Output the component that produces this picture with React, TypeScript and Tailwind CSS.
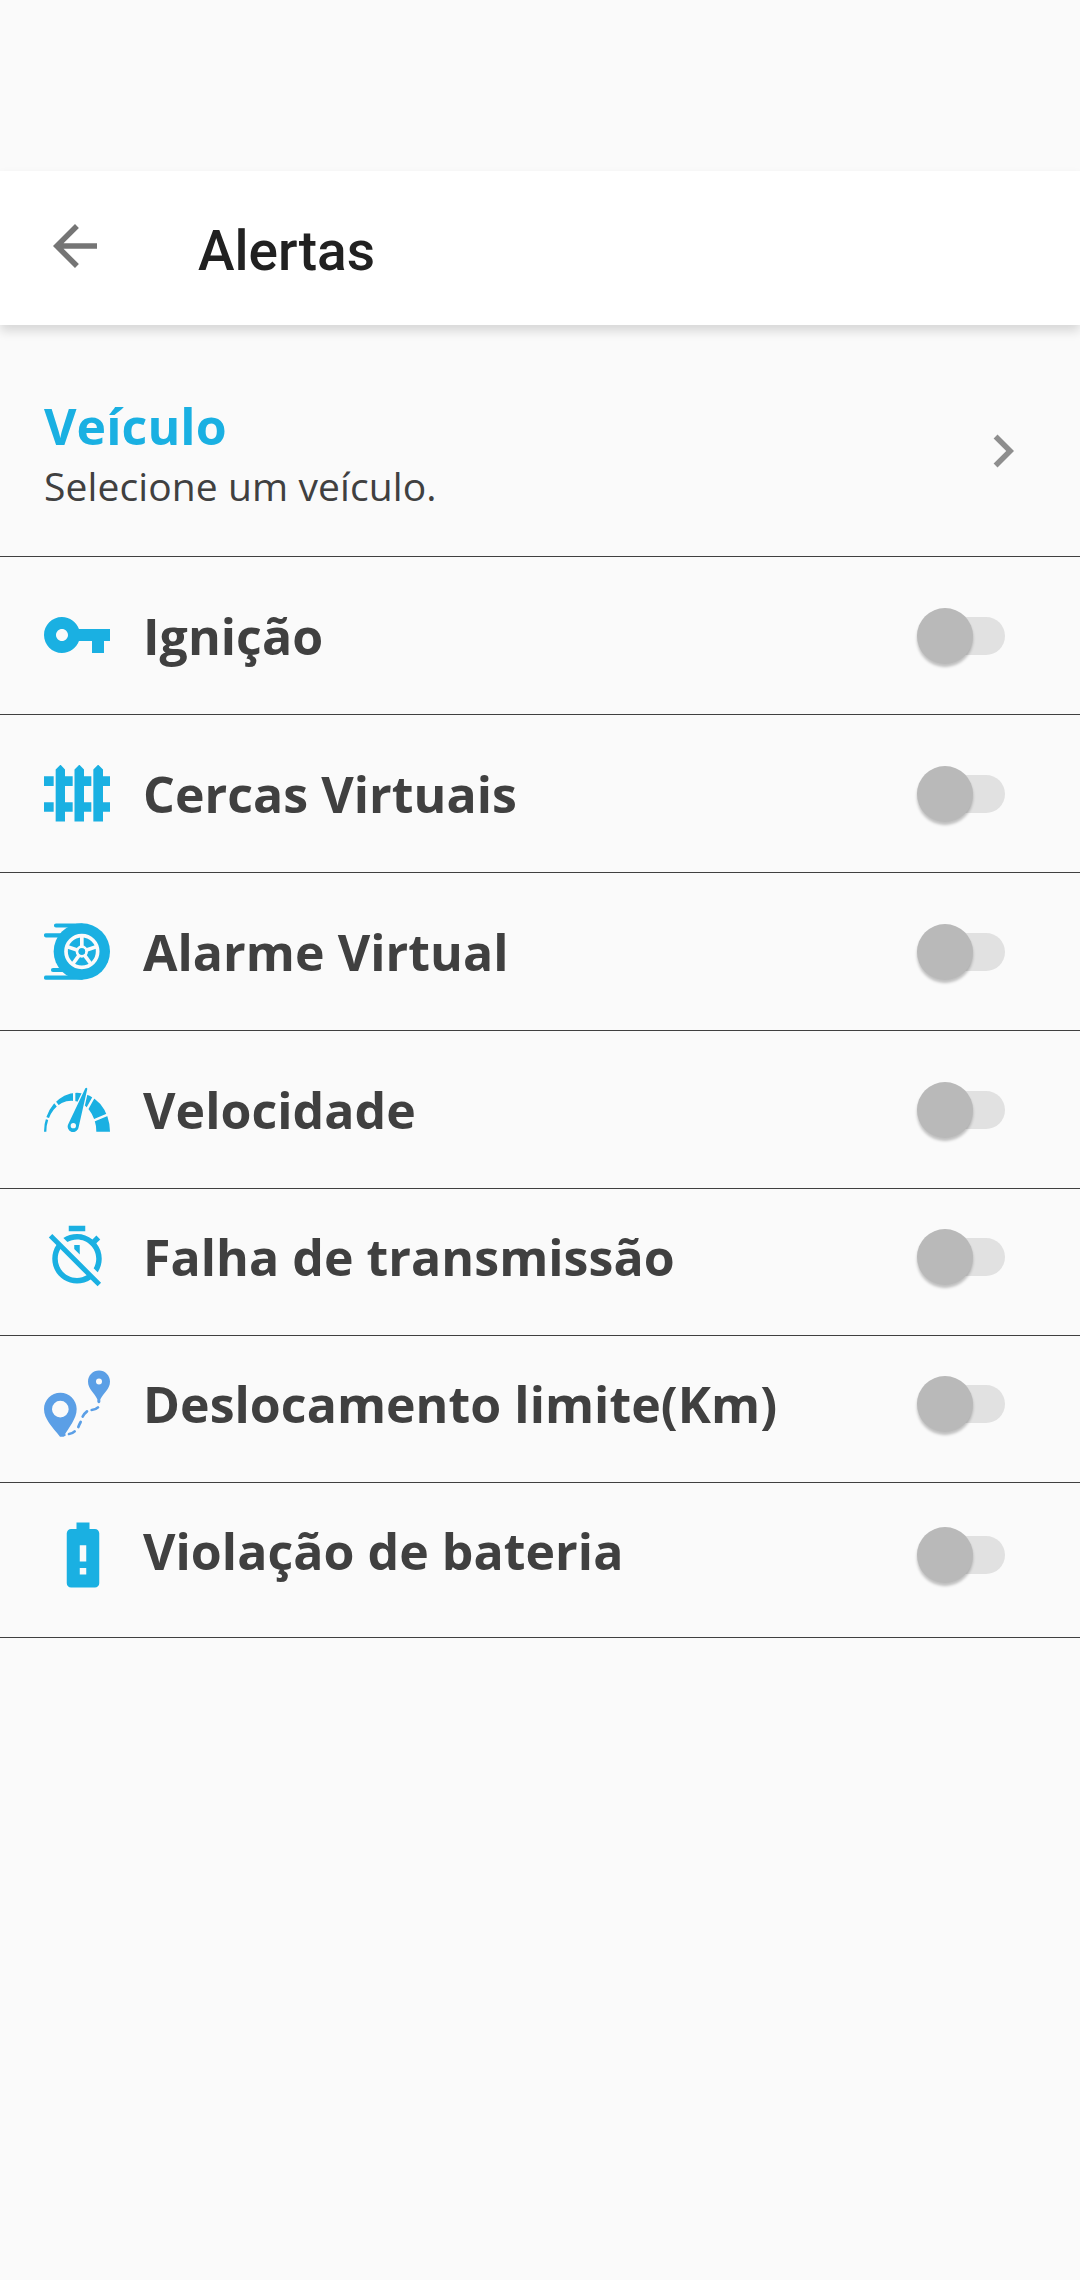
import type { ReactNode } from "react";

const BLUE = "#1ab0e2";
const BG = "#fafafa";

function KeyIcon() {
  return (
    <svg className="-ml-[3px] mt-[42px] h-[72px] w-[72px]" viewBox="0 0 24 24" fill={BLUE}>
      <path d="M12.65 10C11.83 7.67 9.61 6 7 6c-3.31 0-6 2.69-6 6s2.69 6 6 6c2.61 0 4.83-1.67 5.65-4H17v4h4v-4h2v-4H12.65zM7 14c-1.1 0-2-.9-2-2s.9-2 2-2 2 .9 2 2-.9 2-2 2z" />
    </svg>
  );
}

function FenceIcon() {
  return (
    <svg className="mt-[50px] h-[57px] w-[66px]" viewBox="42 45 198 171" fill={BLUE}>
      <path d="M77 58.500l14.500-14.500 13.500 14.500v156h-28zM133.500 58.500l14.500-14.500 14 14.500v156h-28.500zM190 58.500l14.500-14.500 14.500 14.500v156h-29z" />
      <path d="M42 79h29v29h-29zM105 79h23v29h-23zM162 79h22v29h-22zM219 79h21v29h-21zM42 156.500h29v29h-29zM105 156.500h23v29h-23zM162 156.500h22v29h-22zM219 156.500h21v29h-21z" />
    </svg>
  );
}

function TireIcon() {
  return (
    <svg className="mt-[50px] h-[57px] w-[66px]" viewBox="42 52 198 171">
      <g stroke={BLUE} strokeWidth="12.500" strokeLinecap="round">
        <path d="M78 59.500H155M48 89H100M69 193H105M48 216H155" />
      </g>
      <circle cx="155.500" cy="137.500" r="84.500" fill={BLUE} />
      <circle cx="155.500" cy="137.500" r="47.500" fill="none" stroke={BG} strokeWidth="11" />
      {[0, 72, 144, 216, 288].map((a) => (
        <path key={a} d="M155.500 125V92" stroke={BG} strokeWidth="11" transform={`rotate(${a} 155.5 137.5)`} />
      ))}
      <circle cx="155.500" cy="137.500" r="14" fill={BLUE} stroke={BG} strokeWidth="9" />
      <circle cx="155.500" cy="137.500" r="10" fill={BLUE} />
    </svg>
  );
}

function GaugeIcon() {
  return (
    <svg className="mt-[56px] h-[45px] w-[66px]" viewBox="42 49 198 135">
      <path d="M42 183A99 117 0 0 1 240 183H199A75 93 0 0 0 49 183Z" fill={BLUE} />
      <g stroke={BG} strokeWidth="7">
        <path d="M36 138L64 148M68 86L90 114M132.500 60V98M194 74L172 114M240 129L190 150" />
      </g>
      <path
        d="M166 53Q169 49 172 54L146 169A16.500 16.500 0 1 1 115 160Z"
        fill={BLUE}
        stroke={BG}
        strokeWidth="8"
        paintOrder="stroke"
      />
      <circle cx="130" cy="165" r="8" fill={BG} />
    </svg>
  );
}

function TimerOffIcon() {
  return (
    <svg className="mt-[33.5px] h-[66px] w-[66px]" viewBox="0 0 24 24" fill={BLUE}>
      <path d="M19.04 4.55l-1.42 1.42C16.07 4.74 14.12 4 12 4c-1.83 0-3.53.55-4.95 1.48l1.46 1.46C9.53 6.35 10.73 6 12 6c3.87 0 7 3.13 7 7 0 1.27-.35 2.47-.94 3.49l1.45 1.45C20.45 16.53 21 14.83 21 13c0-2.12-.74-4.07-1.97-5.61l1.42-1.42-1.41-1.42zM15 1H9v2h6V1zm-4 8.440l2 2V8h-2v1.440zM3.020 4L1.750 5.270 4.500 8.030C3.550 9.450 3 11.160 3 13c0 4.970 4.020 9 9 9 1.840 0 3.550-.55 4.980-1.500l2.500 2.500 1.270-1.270-7.710-7.710L3.020 4zM12 20c-3.870 0-7-3.130-7-7 0-1.280.35-2.480.95-3.520l9.560 9.560c-1.030.61-2.230.96-3.510.96z" />
    </svg>
  );
}

function RouteIcon() {
  return (
    <svg className="mt-[33.5px] h-[67px] w-[66px]" viewBox="42 43 198 201">
      <g fill="#5b9fe6" fillRule="evenodd">
        <path d="M91 111C64 111 42 133 42 160C42 190 67 214 90 243H101C117 214 140 190 140 160C140 133 118 111 91 111ZM91 135.500a25 25 0 1 1 0 50a25 25 0 1 1 0-50Z" />
        <path d="M207 44.500C189 44.500 174 59 174 77.500C174 100 193 111 202 131V139Q207 147 211 139V131C221 111 240 100 240 77.500C240 59 225 44.500 207 44.500ZM207 68.500a9 9 0 1 1 0 18a9 9 0 1 1 0-18Z" />
      </g>
      <path
        d="M103 238L102 238M117 235Q127 234 134 227M145 214Q148 206 152 199M158 183Q163 173 171 167M185 163Q197 162 204 155"
        fill="none"
        stroke="#5b9fe6"
        strokeWidth="8"
        strokeLinecap="round"
      />
    </svg>
  );
}

function BatteryIcon() {
  return (
    <svg className="-ml-[0.5px] mt-[32.5px] h-[78px] w-[78px] shrink-0" viewBox="0 0 24 24" fill={BLUE}>
      <path d="M15.67 4H14V2h-4v2H8.330C7.600 4 7 4.600 7 5.330v15.330C7 21.400 7.600 22 8.330 22h7.330c.74 0 1.340-.6 1.340-1.330V5.330C17 4.600 16.400 4 15.670 4zM13 18h-2v-2h2v2zm0-4h-2V9h2v5z" />
    </svg>
  );
}

function Switch() {
  return (
    <div role="switch" aria-checked="false" className="flex h-14 w-[88px] items-center">
      <div className="z-10 size-14 shrink-0 rounded-full bg-[#b9b9b9] shadow-[0_3px_3px_rgba(0,0,0,0.24)]" />
      <div className="-ml-11 h-[38px] w-[76px] shrink-0 rounded-full bg-[#e1e1e1]" />
    </div>
  );
}

type Row = { label: string; icon: ReactNode; height: string; text: string; toggle: string };

const rows: Row[] = [
  { label: "Ignição", icon: <KeyIcon />, height: "h-[158px]", text: "pt-[45px]", toggle: "pt-[51px]" },
  { label: "Cercas Virtuais", icon: <FenceIcon />, height: "h-[158px]", text: "pt-[45px]", toggle: "pt-[51px]" },
  { label: "Alarme Virtual", icon: <TireIcon />, height: "h-[158px]", text: "pt-[45px]", toggle: "pt-[51px]" },
  { label: "Velocidade", icon: <GaugeIcon />, height: "h-[158px]", text: "pt-[45px]", toggle: "pt-[51px]" },
  { label: "Falha de transmissão", icon: <TimerOffIcon />, height: "h-[147px]", text: "pt-[34px]", toggle: "pt-[40px]" },
  { label: "Deslocamento limite(Km)", icon: <RouteIcon />, height: "h-[147px]", text: "pt-[34px]", toggle: "pt-[40px]" },
  { label: "Violação de bateria", icon: <BatteryIcon />, height: "h-[155px]", text: "pt-[34px]", toggle: "pt-[44px]" },
];

export default function App() {
  return (
    <div className="flex h-[2280px] w-[1080px] flex-col overflow-hidden bg-[#fafafa] pt-[171px] font-['Open_Sans',sans-serif] text-[#404040]">
      <header className="flex h-[154px] shrink-0 items-start bg-white pl-[42px] shadow-[0_6px_10px_rgba(0,0,0,0.14)]">
        <svg className="mt-[42px] size-[66px]" viewBox="0 0 24 24" fill="#757575">
          <path d="M20 11H7.830l5.590-5.590L12 4l-8 8 8 8 1.410-1.410L7.830 13H20v-2z" />
        </svg>
        <h1 className="ml-[90px] mt-[43px] font-[Roboto,sans-serif] text-[55px] leading-[74px] font-medium text-[#212121]">
          Alertas
        </h1>
      </header>
      <section className="flex h-[232px] shrink-0 items-start justify-between border-b border-[#404040] pr-11 pl-11">
        <div className="pt-[67px]">
          <h2 className="text-[50px] leading-[68px] font-bold tracking-[0.1px] text-[#1ab0e2]">Veículo</h2>
          <p className="-mt-px text-[39px] leading-[53px] tracking-[0.1px]">Selecione um veículo.</p>
        </div>
        <svg className="mt-[93px] size-[66px]" viewBox="0 0 24 24" fill="#8e8e8e">
          <path d="M10 6L8.590 7.410 13.170 12l-4.580 4.590L10 18l6-6z" />
        </svg>
      </section>
      <ul>
        {rows.map((r) => (
          <li key={r.label} className={`flex items-start border-b border-[#404040] pr-[75px] pl-11 ${r.height}`}>
            <div className="w-[99px] shrink-0">{r.icon}</div>
            <div className={`flex-1 text-[50px] leading-[68px] font-bold tracking-[0.05px] whitespace-nowrap ${r.text}`}>
              {r.label}
            </div>
            <div className={r.toggle}>
              <Switch />
            </div>
          </li>
        ))}
      </ul>
    </div>
  );
}
